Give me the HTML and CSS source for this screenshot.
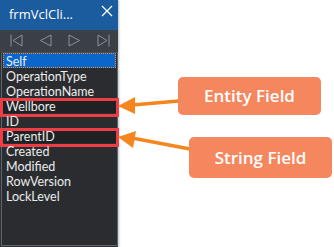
FILE: index.html
```html
<!DOCTYPE html>
<html lang="en">
<head>
  <meta charset="UTF-8" />
  <title>Field List</title>
  <link rel="stylesheet" href="styles.css">
</head>
<body>
  <div class="window">
    <div class="titlebar">
      <span class="title">frmVclCli...</span>
      <svg class="close" width="12" height="12" viewBox="0 0 12 12">
        <path d="M1 1 L11 11 M11 1 L1 11" stroke="#ffffff" stroke-width="1.3" fill="none"/>
      </svg>
    </div>
    <div class="navbar">
      <svg width="13" height="13" viewBox="0 0 13 13">
        <path d="M1 0.5 V12.5 M12 1 L3 6.5 L12 12 Z" stroke="#8b9198" stroke-width="1" fill="none"/>
      </svg>
      <svg width="13" height="13" viewBox="0 0 13 13">
        <path d="M12 1 L1.5 6.5 L12 12 Z" stroke="#8b9198" stroke-width="1" fill="none"/>
      </svg>
      <svg width="13" height="13" viewBox="0 0 13 13">
        <path d="M1 1 L11.5 6.5 L1 12 Z" stroke="#8b9198" stroke-width="1" fill="none"/>
      </svg>
      <svg width="13" height="13" viewBox="0 0 13 13">
        <path d="M12 0.5 V12.5 M1 1 L10 6.5 L1 12 Z" stroke="#8b9198" stroke-width="1" fill="none"/>
      </svg>
    </div>
    <ul class="fields">
      <li class="row selected">Self</li>
      <li class="row">OperationType</li>
      <li class="row">OperationName</li>
      <li class="row marked">Wellbore</li>
      <li class="row">ID</li>
      <li class="row marked">ParentID</li>
      <li class="row">Created</li>
      <li class="row">Modified</li>
      <li class="row">RowVersion</li>
      <li class="row">LockLevel</li>
    </ul>
  </div>

  <div class="annotations">
    <svg class="arrows" width="216" height="247" viewBox="118 0 216 247">
      <g stroke="#f5861f" stroke-width="3.5" fill="none">
        <line x1="132" y1="105" x2="179" y2="101"/>
        <line x1="132" y1="138" x2="190" y2="149"/>
      </g>
      <g fill="#f5861f">
        <polygon points="118,106 135,97 135,114"/>
        <polygon points="118,137 136,131 133,148"/>
      </g>
    </svg>
    <div class="callout entity">Entity Field</div>
    <div class="callout string">String Field</div>
  </div>
</body>
</html>
```

FILE: styles.css
```css
body {
  margin: 0;
  background: #ffffff;
  display: flex;
  height: 247px;
  overflow: hidden;
  font-family: 'Open Sans', 'Liberation Sans', sans-serif;
}

.window {
  width: 118px;
  height: 247px;
  background: #2d3035;
  display: flex;
  flex-direction: column;
  box-shadow: 1px 0 2px rgba(0, 0, 0, 0.25);
}

.titlebar {
  height: 30px;
  background: #1a5c9d;
  display: flex;
  align-items: center;
  justify-content: space-between;
  padding: 0 5px 0 9px;
}

.title {
  color: #ffffff;
  font-size: 13px;
  margin-top: -3px;
}

.close {
  margin-top: -8px;
}

.navbar {
  height: 21px;
  background: #3b4046;
  display: flex;
  align-items: center;
  gap: 16px;
  padding-left: 10px;
  padding-bottom: 1px;
}

.fields {
  list-style: none;
  margin: 0 0 1px 1px;
  padding: 0;
  flex: 1;
  background: #2a2c30;
  border: 1px solid #5f656c;
  border-top-color: #4a4f55;
}

.row {
  position: relative;
  height: 13px;
  line-height: 13px;
  padding: 2px 0 0 4px;
  font-family: Lato, 'Open Sans', sans-serif;
  font-size: 12.5px;
  color: #ececec;
  white-space: nowrap;
}

.row.selected {
  background: #0b66cc;
  outline: 1px dotted #f28a2c;
  outline-offset: -1px;
  margin: 0 1px 0 1px;
  padding-left: 3px;
}

.row.marked {
  background: #1f2124;
}

.row.marked::after {
  content: "";
  position: absolute;
  left: -2px;
  right: -2px;
  top: 0;
  height: 19px;
  border: 3px solid #ee3d45;
  box-sizing: border-box;
}

.annotations {
  position: relative;
  flex: 1;
}

.arrows {
  position: absolute;
  left: 0;
  top: 0;
}

.callout {
  position: absolute;
  width: 143px;
  background: #f5875f;
  border-radius: 5px;
  color: #ffffff;
  font-size: 17px;
  font-weight: 600;
  text-align: center;
  box-sizing: border-box;
}

.callout.entity {
  left: 60px;
  top: 77px;
  height: 38px;
  line-height: 38px;
}

.callout.string {
  left: 71px;
  top: 137px;
  height: 41px;
  line-height: 41px;
}
```
